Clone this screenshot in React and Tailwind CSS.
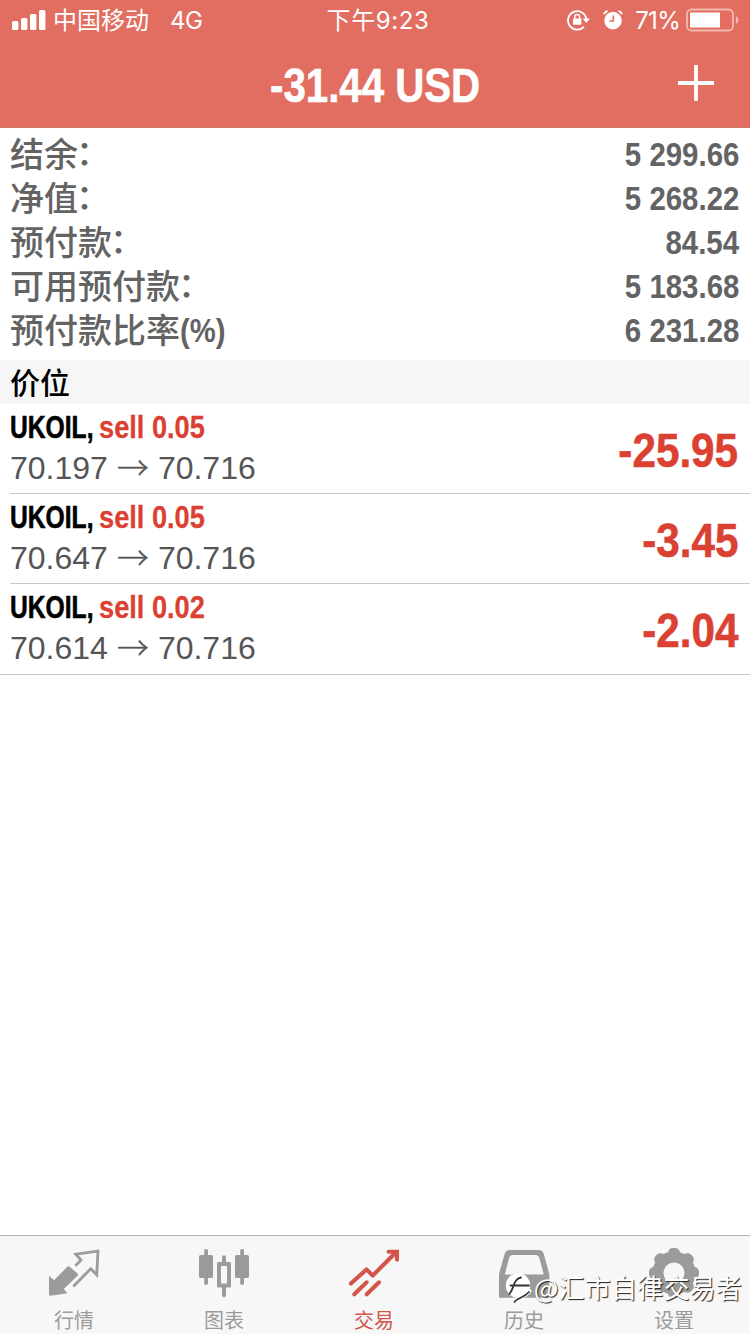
import React from "react";

const summary = [
  ["结余", true, "5 299.66"],
  ["净值", true, "5 268.22"],
  ["预付款", true, "84.54"],
  ["可用预付款", true, "5 183.68"],
  ["预付款比率", false, "6 231.28"],
];

const positions = [
  { lots: "sell 0.05", open: "70.197", now: "70.716", profit: "-25.95" },
  { lots: "sell 0.05", open: "70.647", now: "70.716", profit: "-3.45" },
  { lots: "sell 0.02", open: "70.614", now: "70.716", profit: "-2.04" },
];

function StatusBar() {
  return (
    <div className="grid h-10 grid-cols-3 items-center font-['Inter','Noto_Sans_CJK_SC',sans-serif] text-[24px] leading-10 text-white">
      <div className="flex items-center pl-3">
        <svg className="h-5 w-[34px]" viewBox="0 0 34 20" fill="white">
          <rect x="0" y="11" width="6.4" height="9" rx="1.6" />
          <rect x="9" y="8" width="6.4" height="12" rx="1.6" />
          <rect x="18" y="4" width="6.4" height="16" rx="1.6" />
          <rect x="27" y="0" width="6.4" height="20" rx="1.6" />
        </svg>
        <span className="ml-[7px] translate-y-[1px] whitespace-nowrap">中国移动</span>
        <span className="ml-[21px] translate-y-[1px] tracking-[-0.4px]">4G</span>
      </div>
      <div className="translate-y-[1px] text-center tracking-[0.6px]">
        <span className="ml-[6px]">下午9:23</span>
      </div>
      <div className="flex items-center justify-end pr-[11px]">
        <svg className="h-[22px] w-[23px]" viewBox="0 0 23 22" fill="none" stroke="white">
          <path d="M17 17.6 A9.2 9.2 0 1 1 19.3 10" strokeWidth="1.8" />
          <path d="M15.6 9.6 H23 L19.3 14 Z" fill="white" stroke="none" />
          <rect x="6" y="9.5" width="8.4" height="6.3" rx="0.8" fill="white" stroke="none" />
          <path d="M7.8 10 V7.8 A2.4 2.4 0 0 1 12.6 7.8 V10" strokeWidth="1.5" />
        </svg>
        <svg className="ml-[13px] h-5 w-5" viewBox="0 0 20 20" fill="none">
          <circle cx="10" cy="10.6" r="8.8" fill="white" />
          <path d="M10.3 5.4 V11 H6.4" stroke="#e16e61" strokeWidth="1.6" />
          <path d="M1 4.3 A5 5 0 0 1 4.6 1 M19 4.3 A5 5 0 0 0 15.4 1" stroke="white" strokeWidth="1.8" />
        </svg>
        <span className="ml-3 translate-y-[1px] tracking-[-0.7px]">71%</span>
        <svg className="ml-[6px] h-6 w-[53px]" viewBox="0 0 53 24" fill="none">
          <rect x="1" y="1.5" width="46" height="21" rx="4.5" stroke="#f4b9b1" strokeWidth="1.8" />
          <rect x="4" y="4.5" width="30" height="15" rx="1" fill="white" />
          <path d="M50 8 Q55 12 50 16 Z" fill="#f4b9b1" />
        </svg>
      </div>
    </div>
  );
}

function Header() {
  return (
    <header className="h-32 border-b border-[#cf7369] bg-[#e16e61]">
      <StatusBar />
      <div className="grid h-[87px] grid-cols-[1fr_auto_1fr] items-center">
        <span />
        <h1 className="mt-[4px] w-[210px] text-[48px] leading-[83px] font-bold text-white [-webkit-text-stroke:0.6px]">
          <span className="inline-block origin-left scale-x-[0.838] whitespace-nowrap">-31.44 USD</span>
        </h1>
        <svg className="mb-[1px] mr-9 h-9 w-9 justify-self-end" viewBox="0 0 36 36" stroke="white" strokeWidth="3.8">
          <path d="M18 0 V36 M0 18 H36" />
        </svg>
      </div>
    </header>
  );
}

function Summary() {
  return (
    <section className="pt-1 pr-[11px] pb-2 pl-[10px] text-[#636363]">
      {summary.map(([label, colon, value]) => (
        <div key={label} className="flex h-11 items-center justify-between">
          <span className="mt-[2px] text-[34px] leading-[40px] font-medium whitespace-nowrap">
            {label}
            {colon ? (
              <span className="-ml-[2px] inline-block -translate-y-[2px]">：</span>
            ) : (
              <span className="inline-block origin-left scale-x-[0.86] -translate-y-[1px] font-bold">(%)</span>
            )}
          </span>
          <span className="origin-right scale-x-[0.865] text-[34px] leading-[44px] font-bold whitespace-nowrap">{value}</span>
        </div>
      ))}
    </section>
  );
}

function Position({ item, last }) {
  return (
    <li className={last ? "border-b border-[#c8c8c8] pl-[10px]" : "pl-[10px]"}>
      <div className={last ? "flex h-[90px] justify-between pr-[12px]" : "flex h-[90px] justify-between border-b border-[#c8c8c8] pr-[12px]"}>
        <div className="pt-[3px]">
          <div className="flex h-10 items-center text-[32px] leading-10 font-bold whitespace-nowrap">
            <span className="w-[89px] text-black [-webkit-text-stroke:0.6px]">
              <span className="inline-block origin-left scale-x-[0.77]">UKOIL,</span>
            </span>
            <span className="inline-block origin-left scale-x-[0.85] text-[#db4132] [-webkit-text-stroke:0.3px]">{item.lots}</span>
          </div>
          <div className="flex h-[42px] items-center text-[32px] leading-[42px] text-[#555555]">
            <span>{item.open}</span>
            <span className="mx-[9px] w-8 -translate-y-[2px] font-['Noto_Sans_CJK_SC',sans-serif] leading-[42px] font-light [-webkit-text-stroke:0.3px]">→</span>
            <span>{item.now}</span>
          </div>
        </div>
        <span className="origin-right scale-x-[0.88] text-[48px] leading-[94px] font-bold text-[#db4132] [-webkit-text-stroke:0.6px]">{item.profit}</span>
      </div>
    </li>
  );
}

const icons = {
  quotes: (
    <>
      <path d="M1 27.7 L6 32.3 L19 19 Q20.3 17.4 22 19 L29.3 25.3 Q30.6 26.6 29.3 28 L15.8 41 L19.3 45.3 L2.5 47.7 Q1 47.8 1 46 Z" fill="currentColor" />
      <path d="M27.5 17.7 L33 12 L27.8 6.2 L50 3.2 L48.7 26.8 L42.7 20.8 L25.3 38.5" fill="none" stroke="currentColor" strokeWidth="2.8" />
    </>
  ),
  chart: (
    <g fill="currentColor">
      <rect x="1" y="7" width="14" height="23" rx="1.5" />
      <rect x="6.2" y="1" width="3.8" height="36" rx="1.8" />
      <rect x="37" y="7" width="14" height="23" rx="1.5" />
      <rect x="42.2" y="1" width="3.8" height="36" rx="1.8" />
      <path d="M24 14 V9 Q24 7.2 26 7.2 Q28 7.2 28 9 V14 H31.5 Q33 14 33 15.5 V38 Q33 39.5 31.5 39.5 H28 V47.5 Q28 49.3 26 49.3 Q24 49.3 24 47.5 V39.5 H20.5 Q19 39.5 19 38 V15.5 Q19 14 20.5 14 Z M23 18 V35.5 H29 V18 Z" fillRule="evenodd" />
    </g>
  ),
  trade: (
    <g fill="none" stroke="currentColor" strokeWidth="4.1" strokeLinecap="round">
      <path d="M2.9 35.6 L18.5 21.4 L24.7 27.6 L47.5 4.8" strokeLinejoin="round" />
      <path d="M40.6 3.8 H49 V11.8" />
      <path d="M18.7 34.3 L6.3 46.3 M31 34.3 L18.7 46.3" />
    </g>
  ),
  history: (
    <path
      d="M1 49.7 V26 L6.6 6 Q7.8 2 11.6 2 H40.6 Q44.6 2 45.8 6 L51.3 26 V49.7 Z M6.8 26.5 H45.8 L41.2 9.5 Q40.5 7 38 7 H14.4 Q12 7 11.2 9.5 Z"
      fill="currentColor"
      fillRule="evenodd"
    />
  ),
  settings: (
    <g fill="currentColor">
      <circle cx="26" cy="25" r="16" fill="none" stroke="currentColor" strokeWidth="11" />
      {[0, 45, 90, 135, 180, 225, 270, 315].map((a) => (
        <rect key={a} x="20" y="0" width="12" height="11" rx="5" transform={`rotate(${a} 26 25)`} />
      ))}
    </g>
  ),
};

const tabs = [
  ["quotes", "行情"],
  ["chart", "图表"],
  ["trade", "交易"],
  ["history", "历史"],
  ["settings", "设置"],
];

function TabBar() {
  return (
    <nav className="relative h-[99px] border-t border-[#b2b2b2] bg-[#f7f7f7]">
      <div className="grid h-full grid-cols-5">
        {tabs.map(([id, label]) => (
          <div key={id} className={id === "trade" ? "flex flex-col items-center pr-[2px] pt-3 text-[#d3544a]" : "flex flex-col items-center pr-[2px] pt-3 text-[#9b9b9b]"}>
            <svg className="h-[52px] w-[52px]" viewBox="0 0 52 52">
              {icons[id]}
            </svg>
            <span className="mt-[6px] font-['Noto_Sans_CJK_SC',sans-serif] text-[20px] leading-7">{label}</span>
          </div>
        ))}
      </div>
      <div className="absolute top-[33px] right-[8px] flex items-center">
        <svg className="h-8 w-[30px]" viewBox="0 0 30 32" fill="none" strokeLinecap="round">
          <circle cx="13" cy="14.5" r="12.2" fill="white" />
          <path d="M4.5 23 C9.5 17 8 8 16 6.5 M5.5 14.5 H24" stroke="#333333" strokeWidth="1.8" />
          <path d="M9 31 C11 25.5 20 27 24.5 20" stroke="white" strokeWidth="4" />
          <path d="M9.5 31 C12 26.5 19 27 24 21" stroke="#333333" strokeWidth="1.7" />
        </svg>
        <span className="-ml-[1px] font-['Noto_Sans_CJK_SC',sans-serif] text-[26px] leading-9 font-normal tracking-[0.2px] whitespace-nowrap text-white [text-shadow:1px_1px_1px_#222]">@汇市自律交易者</span>
      </div>
    </nav>
  );
}

export default function App() {
  return (
    <div className="flex h-[1334px] w-[750px] flex-col overflow-hidden bg-white font-['Liberation_Sans','Noto_Sans_CJK_SC',sans-serif]">
      <Header />
      <Summary />
      <h2 className="h-11 bg-[#f6f6f6] pl-[10px] font-['Noto_Sans_CJK_SC',sans-serif] text-[30px] leading-[42px] font-medium text-black">价位</h2>
      <ul className="grow">
        {positions.map((item, i) => (
          <Position key={item.open} item={item} last={i === positions.length - 1} />
        ))}
      </ul>
      <TabBar />
    </div>
  );
}
